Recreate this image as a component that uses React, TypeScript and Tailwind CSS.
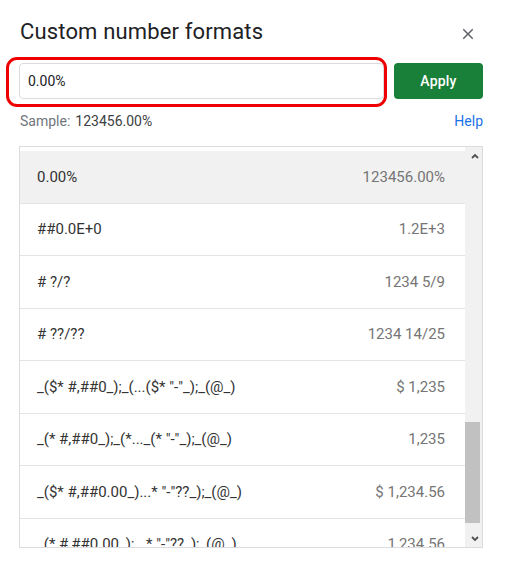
import React from 'react';

const FORMATS: { pattern: string; sample: string }[] = [
  { pattern: '0.00%', sample: '123456.00%' },
  { pattern: '##0.0E+0', sample: '1.2E+3' },
  { pattern: '# ?/?', sample: '1234 5/9' },
  { pattern: '# ??/??', sample: '1234 14/25' },
  { pattern: '_($* #,##0_);_(...($* "-"_);_(@_)', sample: '$ 1,235' },
  { pattern: '_(* #,##0_);_(*..._(* "-"_);_(@_)', sample: '1,235' },
  { pattern: '_($* #,##0.00_)...* "-"??_);_(@_)', sample: '$ 1,234.56' },
  { pattern: '_(* #,##0.00_);...* "-"??_);_(@_)', sample: '1,234.56' },
];

const Chevron = ({ down }: { down?: boolean }) => (
  <svg width="8" height="6" viewBox="0 0 8 6" className={down ? 'rotate-180' : ''}>
    <path d="M1 5 L4 2 L7 5" fill="none" stroke="#505050" strokeWidth="1.8" />
  </svg>
);

export default function App() {
  return (
    <div className="relative w-[505px] h-[569px] bg-white pl-[19px] pr-[22px] font-['Roboto',sans-serif]">
      {/* header */}
      <div className="flex items-center justify-between pt-[18px]">
        <h2 className="text-[22px] leading-[28px] tracking-[0.15px] text-[#202124] pl-[1px]">Custom number formats</h2>
        <button className="mr-[6px] mt-[4px] flex items-center justify-center">
          <svg width="18" height="18" viewBox="0 0 24 24" fill="#5f6368">
            <path d="M19 6.41L17.59 5 12 10.59 6.41 5 5 6.41 10.59 12 5 17.59 6.41 19 12 13.41 17.59 19 19 17.59 13.41 12z" />
          </svg>
        </button>
      </div>

      {/* input + apply */}
      <div className="mt-[17px] flex gap-[10px] h-[36px]">
        <input
          readOnly
          value="0.00%"
          className="flex-1 min-w-0 h-full border border-[#dadce0] rounded-[4px] pl-[8px] text-[14px] text-[#202124] outline-none font-['Roboto',sans-serif]"
        />
        <button className="w-[89px] h-full rounded-[4px] bg-[#188038] text-white text-[14px] font-medium tracking-[0.2px]">
          Apply
        </button>
      </div>

      {/* annotation outline */}
      <div className="absolute left-[6px] top-[57px] w-[381px] h-[50px] border-[3px] border-[#ee0000] rounded-[11px] pointer-events-none" />

      {/* sample line */}
      <div className="mt-[12px] flex items-center justify-between h-[20px] text-[14px]">
        <div className="pl-[1px]">
          <span className="text-[#70757a]">Sample:</span>
          <span className="ml-[5px] text-[#3c4043]">123456.00%</span>
        </div>
        <a className="text-[#1a73e8]">Help</a>
      </div>

      {/* format list */}
      <div className="mt-[15px] h-[402px] border border-[#dadce0] flex overflow-hidden">
        <div className="flex-1 pt-[4px]">
          {FORMATS.map((f, i) => (
            <div
              key={i}
              className={`h-[52.5px] flex items-center justify-between pl-[17px] pr-[20px] border-b border-[#e4e4e4] text-[15px] ${i === 0 ? 'bg-[#f1f1f1]' : 'bg-white'}`}
            >
              <span className="text-[#333333] whitespace-pre">{f.pattern}</span>
              <span className="text-[#757575]">{f.sample}</span>
            </div>
          ))}
        </div>
        <div className="w-[17px] bg-[#f1f1f1] flex flex-col">
          <div className="h-[17px] flex items-center justify-center pl-[2px]">
            <Chevron />
          </div>
          <div className="flex-1">
            <div className="h-[258px]" />
            <div className="h-[101px] w-[15px] bg-[#c1c1c1]" />
          </div>
          <div className="h-[17px] flex items-center justify-center pl-[2px]">
            <Chevron down />
          </div>
        </div>
      </div>
    </div>
  );
}
